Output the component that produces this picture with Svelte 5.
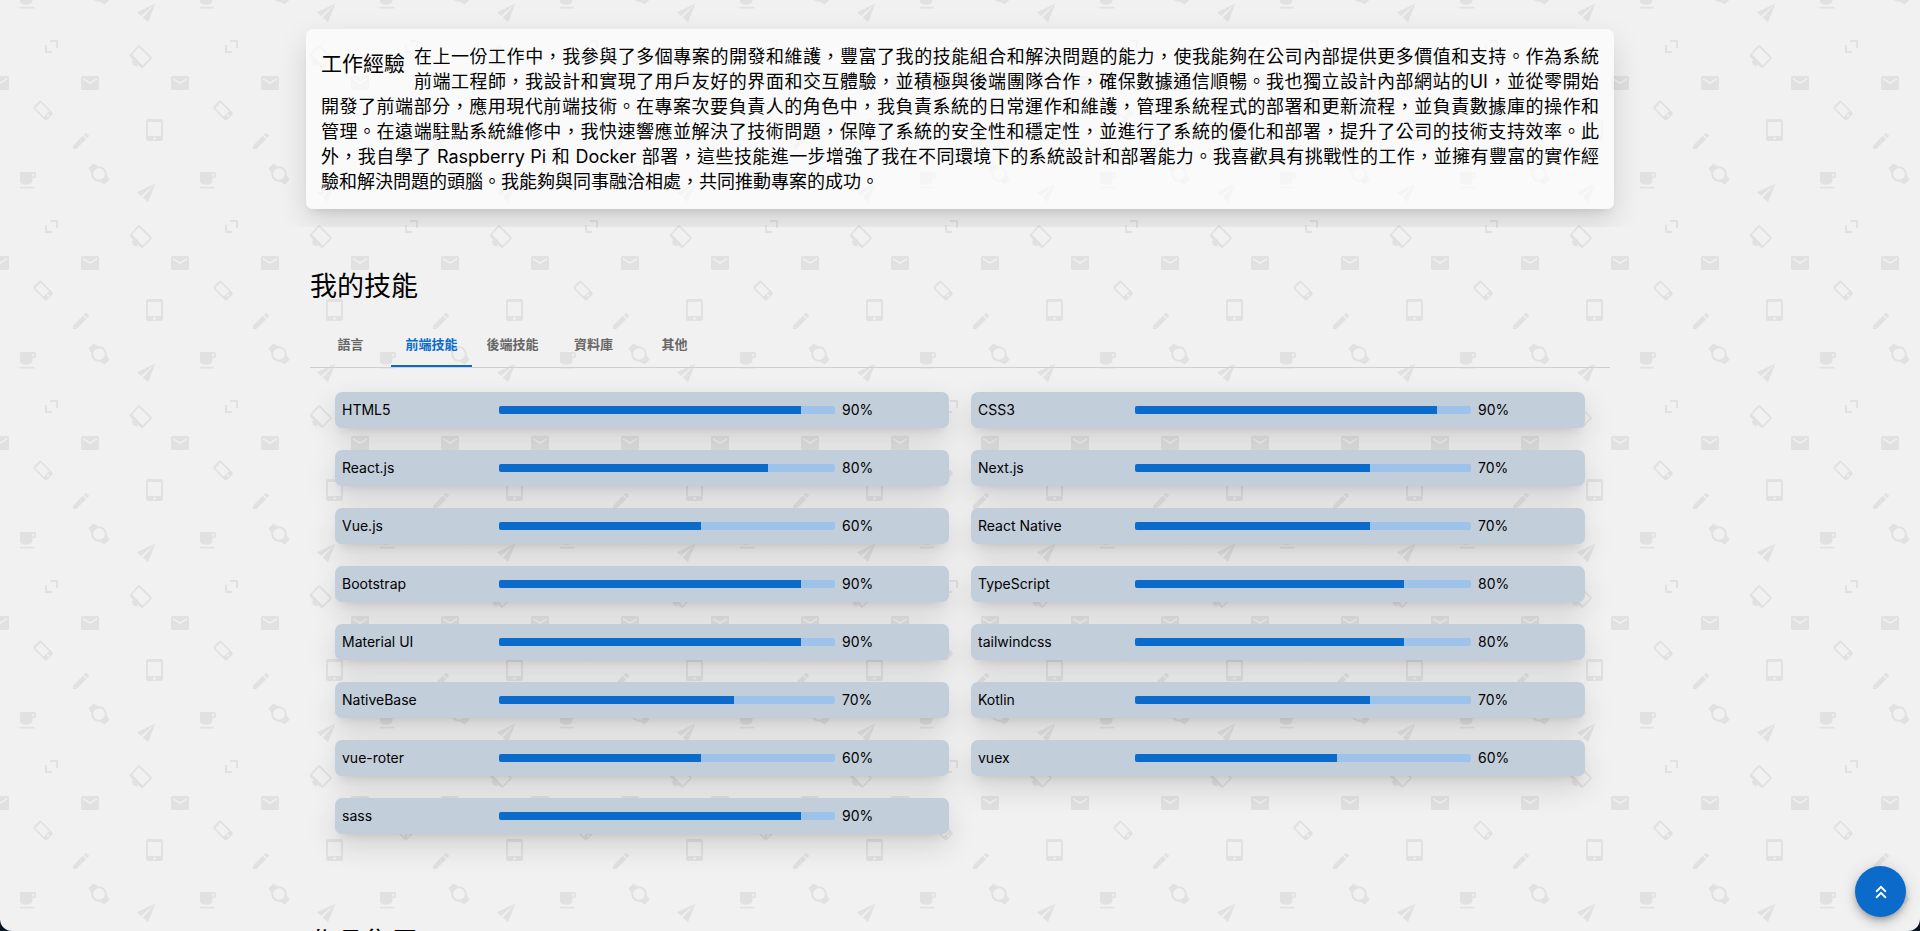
<script>
  const intro = [
    '在上一份工作中，我參與了多個專案的開發和維護，豐富了我的技能組合和解決問題的能力，使我能夠在公司內部提供更多價值和支持。作為系統',
    '前端工程師，我設計和實現了用戶友好的界面和交互體驗，並積極與後端團隊合作，確保數據通信順暢。我也獨立設計內部網站的UI，並從零開始',
    '開發了前端部分，應用現代前端技術。在專案次要負責人的角色中，我負責系統的日常運作和維護，管理系統程式的部署和更新流程，並負責數據庫的操作和',
    '管理。在遠端駐點系統維修中，我快速響應並解決了技術問題，保障了系統的安全性和穩定性，並進行了系統的優化和部署，提升了公司的技術支持效率。此',
    '外，我自學了 Raspberry Pi 和 Docker 部署，這些技能進一步增強了我在不同環境下的系統設計和部署能力。我喜歡具有挑戰性的工作，並擁有豐富的實作經',
    '驗和解決問題的頭腦。我能夠與同事融洽相處，共同推動專案的成功。'
  ];

  const tabs = ['語言', '前端技能', '後端技能', '資料庫', '其他'];
  let active = $state(1);

  const skills = [
    { name: 'HTML5', level: 90 },
    { name: 'CSS3', level: 90 },
    { name: 'React.js', level: 80 },
    { name: 'Next.js', level: 70 },
    { name: 'Vue.js', level: 60 },
    { name: 'React Native', level: 70 },
    { name: 'Bootstrap', level: 90 },
    { name: 'TypeScript', level: 80 },
    { name: 'Material UI', level: 90 },
    { name: 'tailwindcss', level: 80 },
    { name: 'NativeBase', level: 70 },
    { name: 'Kotlin', level: 70 },
    { name: 'vue-roter', level: 60 },
    { name: 'vuex', level: 60 },
    { name: 'sass', level: 90 }
  ];

  let scroller;
  const toTop = () => scroller.scrollTo({ top: 0, behavior: 'smooth' });
</script>

<div class="frame">
  <svg class="wallpaper" aria-hidden="true">
    <defs>
      <g id="mail">
        <path fill-rule="evenodd" d="M1.5 0h15A1.500 1.500 0 0 1 18 1.500v11a1.500 1.500 0 0 1-1.500 1.500h-15A1.500 1.500 0 0 1 0 12.500v-11A1.500 1.500 0 0 1 1.500 0zM2 2v1.600L9 8l7-4.400V2L9 6.200z" />
      </g>
      <g id="low-icons">
        <path transform="translate(16.400 169.300) scale(.89)" d="M20 3H4v10c0 2.210 1.790 4 4 4h6c2.210 0 4-1.790 4-4v-3h2c1.110 0 2-.9 2-2V5c0-1.110-.89-2-2-2zm0 5h-2V5h2v3zM4 19.500h16v2H4z" />
        <g transform="translate(99 174) rotate(-45)">
          <path fill-rule="evenodd" d="M-3.500-11.500h7l1.200 5.400a7.600 7.600 0 0 1 0 12.200l-1.200 5.400h-7l-1.200-5.400a7.600 7.600 0 0 1 0-12.200zM0-5.800a5.800 5.800 0 1 0 0 11.600a5.800 5.800 0 0 0 0-11.600z" />
        </g>
      </g>
      <pattern id="gadgets" width="180" height="180" patternUnits="userSpaceOnUse">
        <g fill="#e1e1e1">
          <path d="M50 40h8v8h-2v-6h-6zM45 45h2v6h5v2h-7z" />
          <path fill-rule="evenodd" d="M138 45.500q1-1 2 0l11.500 11.500q1 1 0 2l-8.500 8.500q-1 1-2 0L137.500 64.500l-1 2.500-1.500-1.500-2.500-.5.5-2-2-1 2.500-1.500-3.500-4q-1-1 0-2zM139 47.200l-6.800 7.300 10.500 11 7.300-7.500z" />
          <use href="#mail" x="-9" y="76" />
          <use href="#mail" x="81" y="76" />
          <use href="#mail" x="171" y="76" />
          <g transform="translate(43 110.500) rotate(-45)">
            <path fill-rule="evenodd" d="M-3.500-9.500h7a2 2 0 0 1 2 2v15a2 2 0 0 1-2 2h-7a2 2 0 0 1-2-2v-15a2 2 0 0 1 2-2zM-3.800-7.200v12h7.600v-12zM0 6a1.200 1.200 0 1 0 0 2.400A1.200 1.200 0 0 0 0 6z" />
          </g>
          <path fill-rule="evenodd" d="M148 119h13a2 2 0 0 1 2 2v18a2 2 0 0 1-2 2h-13a2 2 0 0 1-2-2v-18a2 2 0 0 1 2-2zM148 122v14h13v-14zM154.500 137.200a1.300 1.300 0 1 0 0 2.600a1.300 1.300 0 0 0 0-2.600z" />
          <path transform="translate(70.300 130.300) scale(.89)" d="M3 17.250V21h3.750L17.810 9.940l-3.750-3.750L3 17.250zM20.710 7.040c.39-.39.39-1.020 0-1.410l-2.340-2.340a1 1 0 0 0-1.410 0l-1.830 1.830 3.750 3.750 1.830-1.830z" />
          <path d="M155.500 3.500L136.800 12.200l4.200 3.800zM155.500 3.500L142.800 17.500l5.200 4.700z" />
          <use href="#low-icons" />
          <use href="#low-icons" y="-180" />
        </g>
      </pattern>
    </defs>
    <rect width="100%" height="100%" fill="url(#gadgets)" />
  </svg>

  <main class="scroller" bind:this={scroller}>
    <section class="experience">
      <div class="container">
        <article class="card">
          <h3>工作經驗</h3>
          <p>
            {#each intro as line}<span>{line}</span>{/each}
          </p>
        </article>
      </div>
    </section>

    <section class="skills">
      <div class="container">
        <h2>我的技能</h2>
        <div class="tabs" role="tablist">
          {#each tabs as tab, i}
            <button
              type="button"
              role="tab"
              aria-selected={active === i}
              class:active={active === i}
              onclick={() => (active = i)}>{tab}</button>
          {/each}
        </div>
        <ul class="grid">
          {#each skills as skill}
            <li>
              <span class="name">{skill.name}</span>
              <span class="track" role="progressbar" aria-label={skill.name} aria-valuenow={skill.level} aria-valuemin="0" aria-valuemax="100">
                <span class="fill" style="width: {skill.level}%"></span>
              </span>
              <span>{skill.level}%</span>
            </li>
          {/each}
        </ul>
      </div>
    </section>

    <section class="works">
      <div class="container">
        <h2>作品集展示</h2>
      </div>
    </section>
  </main>

  <button type="button" class="fab" aria-label="Top" onclick={toTop}>
    <svg viewBox="0 0 24 24" width="22" height="22" fill="currentColor" aria-hidden="true">
      <path d="M6 17.590 7.410 19 12 14.420 16.590 19 18 17.590l-6-6z" />
      <path d="m6 11 1.410 1.410L12 7.830l4.590 4.580L18 11l-6-6z" />
    </svg>
  </button>
</div>

<style>
  :global(body) {
    margin: 0;
    background: #07131f;
  }

  .frame {
    --lift: 0 8px 10px -6px rgba(0, 0, 0, 0.1), 0 12px 30px rgba(0, 0, 0, 0.13);
    position: relative;
    height: 100vh;
    overflow: hidden;
    border-radius: 0 0 12px 12px;
    background: #f1f1f1;
    color: #000;
    font-family: Inter, "Noto Sans CJK TC", sans-serif;
    font-size: 14px;
  }

  .wallpaper {
    position: absolute;
    inset: 0;
    width: 100%;
    height: 100%;
  }

  .scroller {
    position: relative;
    height: 100%;
    overflow: hidden auto;
    scrollbar-width: none;
  }

  .container {
    max-width: 1300px;
    margin: 0 auto;
  }

  .experience {
    padding: 29px 0 18px;
    clip-path: inset(0);
  }

  .card {
    margin: 0 -4px;
    padding: 15px;
    border-radius: 7px;
    background: rgba(255, 255, 255, 0.66);
    box-shadow: var(--lift);
  }

  h3 {
    float: left;
    margin: 0 9px 0 0;
    font-size: 21px;
    font-weight: 400;
    line-height: 40px;
  }

  p {
    margin: 0;
    font-size: 18px;
    line-height: 25px;
  }

  p span {
    display: block;
    text-align: justify;
    text-align-last: justify;
  }

  p span:last-child {
    text-align-last: left;
  }

  .skills {
    padding: 40px 0 65px;
  }

  h2 {
    margin: 0;
    font-size: 27px;
    font-weight: 400;
    line-height: 40px;
  }

  .tabs {
    display: flex;
    margin-top: 14px;
    border-bottom: 1px solid #d0d0d0;
  }

  .tabs button {
    width: 81px;
    height: 46px;
    padding: 0;
    border: 0;
    border-bottom: 2px solid transparent;
    background: none;
    color: #666;
    font: 600 13px Inter, "Noto Sans CJK TC", sans-serif;
    cursor: pointer;
  }

  .tabs button.active {
    border-color: #0b6bcb;
    color: #0b6bcb;
  }

  .grid {
    display: grid;
    grid-template-columns: 1fr 1fr;
    gap: 22px;
    margin: 0;
    padding: 24px 25px;
    list-style: none;
  }

  li {
    display: grid;
    grid-template-columns: 150px 336px 1fr;
    gap: 7px;
    align-items: center;
    padding: 7px;
    border-radius: 7px;
    background: #c3cedb;
    line-height: 22px;
    box-shadow: var(--lift);
  }

  .track {
    height: 8px;
    overflow: hidden;
    border-radius: 2px;
    background: #9dc3ea;
  }

  .fill {
    display: block;
    height: 100%;
    background: #0b6bcb;
  }

  .fab {
    position: absolute;
    right: 14px;
    bottom: 14px;
    display: grid;
    place-items: center;
    width: 51px;
    height: 51px;
    padding: 0;
    border: 0;
    border-radius: 50%;
    background: #0b6bcb;
    color: #fff;
    box-shadow:
      0 3px 5px -1px rgba(0, 0, 0, 0.2),
      0 6px 10px rgba(0, 0, 0, 0.14),
      0 1px 18px rgba(0, 0, 0, 0.12);
    cursor: pointer;
  }
</style>
